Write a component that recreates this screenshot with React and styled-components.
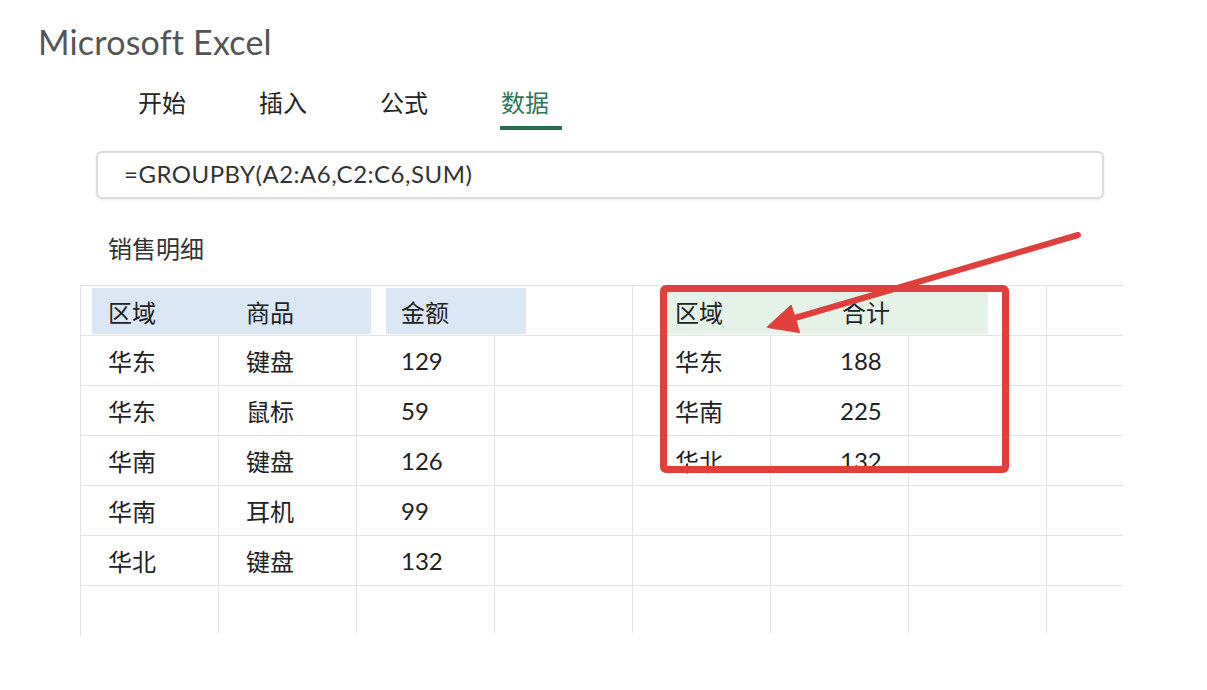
import React from 'react';
import styled, { createGlobalStyle } from 'styled-components';

const GlobalStyle = createGlobalStyle`
  body {
    margin: 0;
    background: #fff;
    font-family: "Lato", "Noto Sans CJK SC", sans-serif;
    color: #222;
  }
`;

const Page = styled.div`
  display: flex;
  flex-direction: column;
  width: 1207px;
  height: 690px;
  overflow: hidden;
`;

const AppTitle = styled.h1`
  margin: 23px 0 0 38px;
  font-size: 34px;
  line-height: 38px;
  font-weight: 400;
  letter-spacing: 0.2px;
  color: #555;
`;

const Tabs = styled.nav`
  display: flex;
  gap: 73px;
  margin: 28px 0 0 138px;
`;

const Tab = styled.div`
  position: relative;
  width: 48px;
  font-size: 24px;
  line-height: 28px;
  padding-bottom: 13px;
  color: ${p => (p.active ? '#2f7658' : '#222')};

  &::after {
    content: '';
    display: ${p => (p.active ? 'block' : 'none')};
    position: absolute;
    left: -1px;
    bottom: 0;
    width: 62px;
    height: 4px;
    background: #286c50;
  }
`;

const FormulaBar = styled.div`
  box-sizing: border-box;
  display: flex;
  align-items: center;
  margin: 21px 0 0 96px;
  width: 1008px;
  height: 48px;
  padding: 0 0 4px 26px;
  border: 2px solid #dcdcdc;
  border-radius: 6px;
  box-shadow: 0 1px 3px rgba(0, 0, 0, 0.08);
  font-size: 24px;
  letter-spacing: 0.5px;
  color: #333;
`;

const SectionTitle = styled.h2`
  margin: 35px 0 0 108px;
  font-size: 24px;
  line-height: 30px;
  font-weight: 400;
  color: #333;
`;

const Sheet = styled.div`
  position: relative;
  margin: 21px 0 0 80px;
  width: 1043px;
  border-left: 1px solid #e4e4e4;
  box-sizing: border-box;
`;

const HeaderRow = styled.div`
  display: flex;
  height: 51px;
  box-sizing: border-box;
  border-top: 1px solid #e4e4e4;
  border-bottom: 1px solid #e4e4e4;
`;

const Gap = styled.div`
  flex: none;
  width: ${p => p.w}px;
  box-sizing: border-box;
  border-right: ${p => (p.line ? '1px solid #e4e4e4' : 'none')};
`;

const Shade = styled.div`
  flex: none;
  display: flex;
  align-items: center;
  width: ${p => p.w}px;
  margin: 2px 0 1px;
  background: ${p => (p.tone === 'green' ? '#e4f2e7' : '#dbe7f5')};
`;

const HeadLabel = styled.span`
  flex: none;
  box-sizing: border-box;
  width: ${p => (p.w ? `${p.w}px` : 'auto')};
  padding-left: ${p => p.pad}px;
  font-size: 24px;
  color: #222;
`;

const Body = styled.div`
  display: grid;
  grid-template-columns: repeat(7, 138px) 76px;
  grid-auto-rows: 50px;
`;

const Cell = styled.div`
  box-sizing: border-box;
  display: flex;
  align-items: center;
  padding-left: ${p => p.pad || 0}px;
  border-right: ${p => (p.last ? 'none' : '1px solid #e4e4e4')};
  border-bottom: ${p => (p.end ? 'none' : '1px solid #e4e4e4')};
  height: ${p => (p.end ? 47 : 50)}px;
  font-size: 24px;
  color: #222;
  overflow: hidden;
`;

const Highlight = styled.div`
  position: absolute;
  left: 579px;
  top: 0;
  width: 349px;
  height: 188px;
  box-sizing: border-box;
  border: 7px solid #e0403c;
  border-radius: 6px;
  pointer-events: none;
`;

const Arrow = styled.svg`
  position: absolute;
  left: -1px;
  top: -60px;
  pointer-events: none;
`;

const tabs = ['开始', '插入', '公式', '数据'];

const pads = [27, 27, 44, 0, 42, 69, 0, 0];

const detail = [
  ['华东', '键盘', '129'],
  ['华东', '鼠标', '59'],
  ['华南', '键盘', '126'],
  ['华南', '耳机', '99'],
  ['华北', '键盘', '132'],
  [],
];

const grouped = [
  ['华东', '188'],
  ['华南', '225'],
  ['华北', '132'],
];

const App = () => {
  const rows = detail.map((left, i) => {
    const right = grouped[i] || [];
    return [left[0], left[1], left[2], '', right[0], right[1], '', ''];
  });

  return (
    <Page>
      <GlobalStyle />
      <AppTitle>Microsoft Excel</AppTitle>

      <Tabs>
        {tabs.map(t => (
          <Tab key={t} active={t === '数据'}>{t}</Tab>
        ))}
      </Tabs>

      <FormulaBar>=GROUPBY(A2:A6,C2:C6,SUM)</FormulaBar>

      <SectionTitle>销售明细</SectionTitle>

      <Sheet>
        <HeaderRow>
          <Gap w={11} />
          <Shade w={279}>
            <HeadLabel w={138} pad={16}>区域</HeadLabel>
            <HeadLabel w={141} pad={16}>商品</HeadLabel>
          </Shade>
          <Gap w={15} />
          <Shade w={140}>
            <HeadLabel pad={15}>金额</HeadLabel>
          </Shade>
          <Gap w={107} line />
          <Gap w={32} />
          <Shade w={323} tone="green">
            <HeadLabel w={177} pad={10}>区域</HeadLabel>
            <HeadLabel>合计</HeadLabel>
          </Shade>
          <Gap w={59} line />
          <Gap w={76} />
        </HeaderRow>

        <Body>
          {rows.map((cells, r) =>
            cells.map((v, c) => (
              <Cell
                key={`${r}-${c}`}
                pad={pads[c]}
                last={c === 7}
                end={r === rows.length - 1}
              >
                {v}
              </Cell>
            ))
          )}
        </Body>

        <Highlight />

        <Arrow width="1043" height="170" viewBox="0 0 1043 170">
          <line x1="998" y1="10" x2="708" y2="95" stroke="#e0403c" strokeWidth="6" strokeLinecap="round" />
          <polygon points="688,102 711,81 719,107" fill="#e0403c" stroke="#e0403c" strokeWidth="2" strokeLinejoin="round" />
        </Arrow>
      </Sheet>
    </Page>
  );
};

export default App;
